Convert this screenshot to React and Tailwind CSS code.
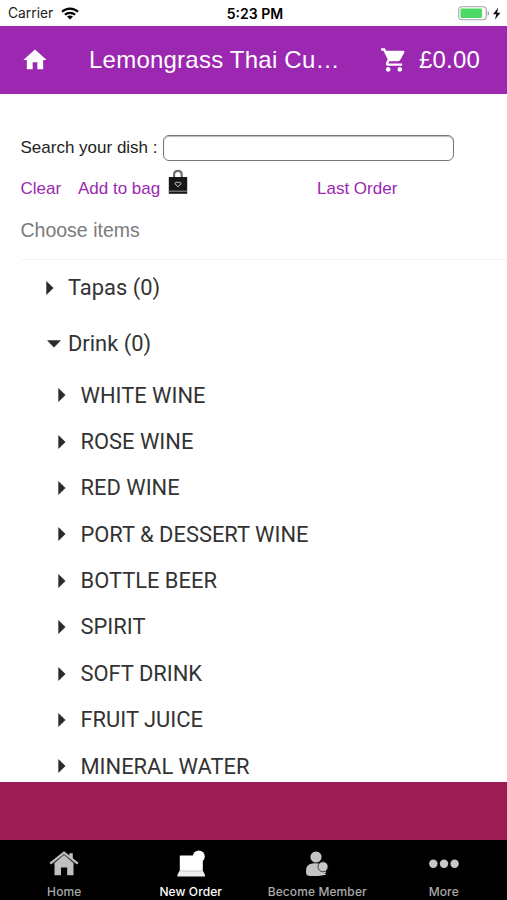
import { MdHome, MdShoppingCart } from 'react-icons/md'

const drinks = [
  "WHITE WINE",
  "ROSE WINE",
  "RED WINE",
  "PORT & DESSERT WINE",
  "BOTTLE BEER",
  "SPIRIT",
  "SOFT DRINK",
  "FRUIT JUICE",
  "MINERAL WATER"
]

function Wifi() {
  return (
    <svg className="ml-[8px] h-[13px] w-[18px]" viewBox="0 0 18 13">
      <g fill="none" stroke="#000" strokeWidth="2.2">
        <path d="M1 4.8C5.4 0.5 12.6 0.5 17 4.8" />
        <path d="M3.9 7.8C6.7 5.1 11.3 5.1 14.1 7.8" />
      </g>
      <path d="M9 12.6L6 9.6C7.6 8.2 10.4 8.2 12 9.6Z" />
    </svg>
  )
}

function Battery() {
  return (
    <svg className="h-[16px] w-[44px]" viewBox="0 0 44 16">
      <rect x="0.7" y="0.8" width="27.6" height="13" rx="3.2" fill="#fff" stroke="#a3a3a3" strokeWidth="1.1" />
      <rect x="2.5" y="2.6" width="21.5" height="9.4" rx="1.4" fill="#4cd964" />
      <path d="M29.6 5C31.6 5.6 31.6 9.2 29.6 9.8Z" fill="#a3a3a3" />
      <path d="M40.3 1.5L35 8.3H38.2L37 13.5L42.5 6.7H39.1Z" fill="#111" />
    </svg>
  )
}

function BagIcon() {
  return (
    <svg className="h-[26px] w-[20px]" viewBox="0 0 20 26">
      <path d="M6.1 10V5.4C6.1 0.6 13.7 0.6 13.7 5.4V10" fill="none" stroke="#6f6f6f" strokeWidth="2.2" />
      <path d="M0.8 8H19.2V24.8H0.8Z" fill="#171717" />
      <path d="M0.6 22.2H19.4" stroke="#b5b5b5" strokeWidth="0.8" />
      <path d="M10 17.8L7.3 15C6.4 13.4 8.8 12.4 10 14C11.2 12.4 13.6 13.4 12.7 15Z" fill="none" stroke="#d8d8d8" strokeWidth="1" />
    </svg>
  )
}

function Arrow({ open }) {
  return open ? (
    <svg className="h-[8px] w-[14px]" viewBox="0 0 14 8">
      <path d="M0 0.3H14L7 7.5Z" fill="#2b2b2b" />
    </svg>
  ) : (
    <svg className="h-[14px] w-[8px]" viewBox="0 0 8 14">
      <path d="M0.3 0V14L7.5 7Z" fill="#2b2b2b" />
    </svg>
  )
}

const tabs = [
  {
    label: "Home",
    icon: (
      <>
        <path d="M5.5 13L15 4.8L24.5 13V25.3H18.2V17.4H12V25.3H5.5Z" fill="#c0c0c0" />
        <path d="M4.2 13.6L15 4.6L25.8 13.6" fill="none" stroke="#555" strokeWidth="0.6" />
        <path d="M1.2 13.7L15 2.6L28.8 13.7" fill="none" stroke="#c0c0c0" strokeWidth="2.2" />
        <path d="M20.3 3.2H23.8V10L20.3 7Z" fill="#c0c0c0" />
      </>
    )
  },
  {
    label: "New Order",
    active: true,
    icon: (
      <>
        <path d="M3.8 5.5H17V8H26.8V21H3.8Z" fill="#fff" />
        <circle cx="22.8" cy="6.6" r="6" fill="#fff" />
        <path d="M3.5 20.8H27L29 25V26.6H1.4V25Z" fill="#ededed" />
        <path d="M3.6 21H27" stroke="#aaa" strokeWidth="0.6" />
      </>
    )
  },
  {
    label: "Become Member",
    icon: (
      <>
        <circle cx="14" cy="7" r="5.6" fill="#c4c4c4" />
        <path d="M4 21C4 13 11 13.2 14 13.2C20 13.2 23 16 24.2 22.4L22.6 23.2L24.4 24.4C18 26.4 9 26.6 5.2 25.2C4.1 24.4 4 23 4 21Z" fill="#c4c4c4" />
        <circle cx="21" cy="16.8" r="5" fill="#c8c8c8" stroke="#222" strokeWidth="0.8" />
      </>
    )
  },
  {
    label: "More",
    icon: (
      <>
        <circle cx="4.3" cy="13.7" r="4.2" fill="#c8c8c8" />
        <circle cx="15" cy="13.7" r="4.2" fill="#c8c8c8" />
        <circle cx="25.6" cy="13.7" r="4.2" fill="#c8c8c8" />
      </>
    )
  }
]

export default function App() {
  return (
    <div className="flex h-[900px] w-[507px] flex-col overflow-hidden bg-white font-['Liberation_Sans',sans-serif]">
      {/* Status bar */}
      <div className="grid h-[25.5px] shrink-0 grid-cols-3 items-center pt-[2px] font-['Inter',sans-serif] text-[#222]">
        <div className="flex items-center pl-2">
          <span className="text-[13.8px]">Carrier</span>
          <Wifi />
        </div>
        <div className="pl-[3px] text-center text-[14px] font-semibold text-black">5:23 PM</div>
        <div className="flex justify-end pr-[5px]">
          <Battery />
        </div>
      </div>

      {/* Header */}
      <header className="flex h-[68.5px] shrink-0 items-center bg-[#9c27b0] text-white">
        <MdHome className="ml-[21px] h-7 w-7" />
        <h1 className="ml-10 w-[291px] text-[24px] tracking-[0.23px] whitespace-nowrap">Lemongrass Thai Cu…</h1>
        <MdShoppingCart className="h-7 w-7" />
        <span className="ml-[11px] text-[24px] tracking-[0.2px]">£0.00</span>
      </header>

      {/* Menu */}
      <main className="flex min-h-0 flex-1 flex-col overflow-hidden">
        <label className="mt-[40px] flex h-[28px] shrink-0 items-center pl-[20.5px] text-[17px] text-[#222]">
          <span className="w-[142.5px] whitespace-nowrap">Search your dish :</span>
          <input className="h-[26px] w-[291px] rounded-[6px] border-[1.5px] border-[#777] bg-white shadow-[inset_0_1px_1px_#bbb]" />
        </label>
        <div className="mt-[8px] flex h-[30px] shrink-0 items-center pl-[20.5px] text-[17px] text-[#9c27b0]">
          <a className="w-[57.5px] pt-[7px]">Clear</a>
          <a className="w-[90px] pt-[7px] whitespace-nowrap">Add to bag</a>
          <div className="w-[149px] pb-[6px]">
            <BagIcon />
          </div>
          <a className="pt-[7px]">Last Order</a>
        </div>
        <h2 className="ml-[20.5px] h-[60px] shrink-0 border-b border-[#f4f4f4] pt-[16px] text-[19.5px] text-[#7b7b7b]">Choose items</h2>

        <div className="font-['Roboto',sans-serif] text-[21.9px] text-[#333]">
          <div className="flex h-[56px] items-center pl-[46px]">
            <span className="w-[22px]"><Arrow /></span>
            <span className="pt-[1.5px]">Tapas (0)</span>
          </div>
          <div className="flex h-[56px] items-center pl-[47px]">
            <span className="w-[21px]"><Arrow open /></span>
            <span className="pt-[1.5px]">Drink (0)</span>
          </div>
          {drinks.map((drink) => (
            <div key={drink} className="flex h-[46.4px] items-center pl-[58px]">
              <span className="w-[22.5px]"><Arrow /></span>
              <span className="pt-[1.5px]">{drink}</span>
            </div>
          ))}
        </div>
      </main>

      <div className="h-[58.5px] shrink-0 bg-[#9c1c54]"></div>

      {/* Tab bar */}
      <nav className="grid h-[60px] shrink-0 grid-cols-4 bg-black pt-[9.5px] pl-[1px] font-['Inter',sans-serif]">
        {tabs.map((tab) => (
          <div key={tab.label} className={tab.active ? "flex flex-col items-center text-white" : "flex flex-col items-center text-[#aaa]"}>
            <svg className="h-[28px] w-[30px]" viewBox="0 0 30 28">{tab.icon}</svg>
            <span className="mt-[6px] text-[12px] leading-[16px] font-medium tracking-[0.1px] whitespace-nowrap">{tab.label}</span>
          </div>
        ))}
      </nav>
    </div>
  )
}
